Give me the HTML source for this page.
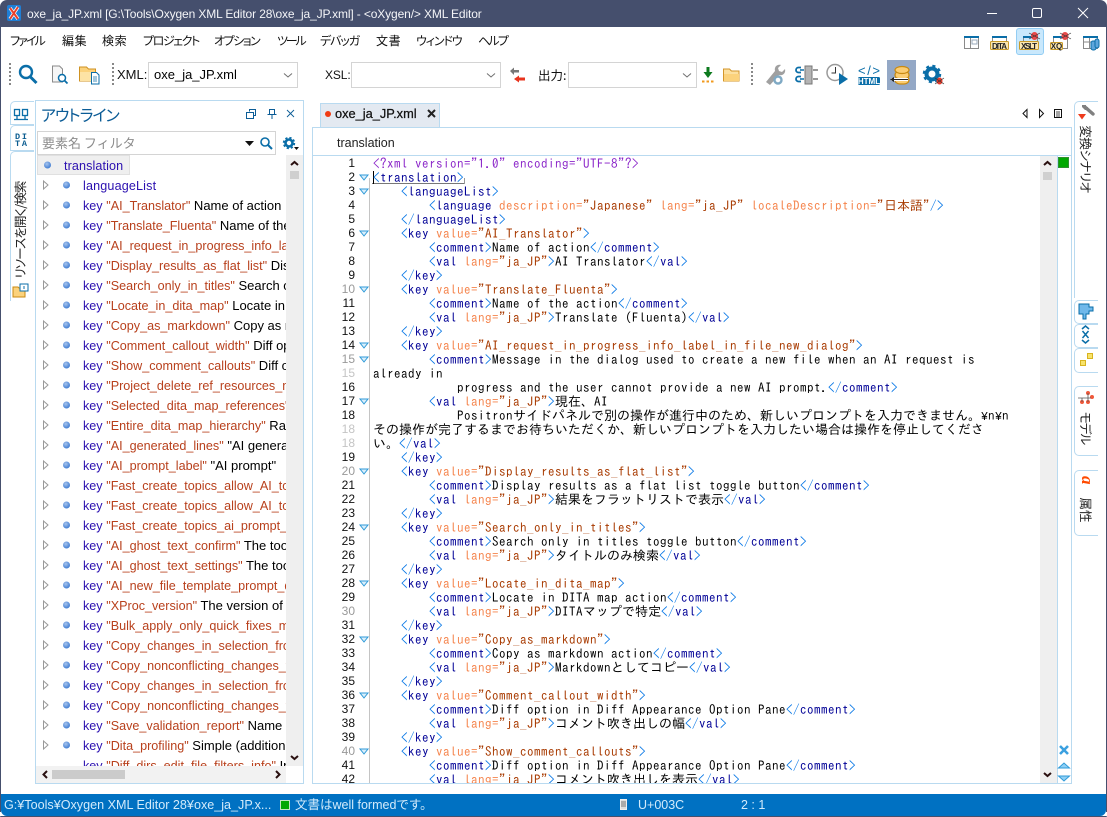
<!DOCTYPE html>
<html lang="ja"><head><meta charset="utf-8"><title>oxe_ja_JP.xml</title>
<style>
html,body{margin:0;padding:0;background:#fff}
#w{position:relative;width:1107px;height:817px;overflow:hidden;background:#fff;font-family:"Liberation Sans","Noto Sans CJK JP",sans-serif;color:#000}
#w>*{position:absolute}
.f{box-sizing:border-box;border:1px solid #b9daf0}
.m{top:32px;font-size:12px;line-height:18px;font-family:"Noto Sans CJK JP",sans-serif;font-feature-settings:"palt";white-space:nowrap;color:#111}
.cb{box-sizing:border-box;border:1px solid #d4d4d4;background:#fff;height:26px;top:62px}
.lb{top:67px;font-size:13px;line-height:16px;white-space:nowrap;color:#111}
#ol{left:36px;top:156px;width:250px;height:610px;overflow:hidden}
#ol div{position:absolute;left:47px;height:20px;line-height:20px;font-size:13px;white-space:nowrap}
#ol b{font-weight:normal;color:#2b10b0;font-size:12.6px}#ol u{text-decoration:none;color:#b8401c;font-size:12.6px}
#nums{left:320px;top:156px;width:35px;margin:0;text-align:right;font:12px/14px "Liberation Sans",sans-serif;height:627px;overflow:hidden;color:#111}
#nums s{text-decoration:none;color:#999}#nums q{quotes:none;color:#c4c4c4}
#code{left:373px;top:157px;width:666px;height:626px;overflow:hidden;margin:0;font:13px/14px "IPAGothic","Liberation Mono",monospace;letter-spacing:.5px;color:#000}
#code i{font-style:normal;letter-spacing:0}
#code em{font:11.6px/0 "Liberation Mono",monospace;letter-spacing:0}
.t{color:#000096}.b{color:#0a78e6}.a{color:#f5844c}.v{color:#a83a00}.p{color:#8b26c9}
.vt{font:12.5px/16px "Noto Sans CJK JP",sans-serif;font-feature-settings:"palt";white-space:nowrap;color:#222}
</style></head><body><div id="w">

<div style="left:0;top:0;width:1107px;height:27px;background:#454f6d;border-radius:7px 7px 0 0"></div>
<div style="left:27px;top:6px;font-size:12px;letter-spacing:-.125px;line-height:16px;color:#f4f5f8;white-space:nowrap">oxe_ja_JP.xml [G:\Tools\Oxygen XML Editor 28\oxe_ja_JP.xml] - &lt;oXygen/&gt; XML Editor</div>
<div style="left:0;top:27px;width:1px;height:785px;background:#454f6d"></div>
<div style="left:1106px;top:27px;width:1px;height:785px;background:#454f6d"></div>

<div class="m" style="left:10px;letter-spacing:-1.9px">ファイル</div>
<div class="m" style="left:62px;letter-spacing:.6px">編集</div>
<div class="m" style="left:102px;letter-spacing:.6px">検索</div>
<div class="m" style="left:143px;letter-spacing:-1.4px">プロジェクト</div>
<div class="m" style="left:214px;letter-spacing:-1.5px">オプション</div>
<div class="m" style="left:277px;letter-spacing:-2.2px">ツール</div>
<div class="m" style="left:320px;letter-spacing:-1.1px">デバッガ</div>
<div class="m" style="left:376px;letter-spacing:.6px">文書</div>
<div class="m" style="left:416px;letter-spacing:-1.1px">ウィンドウ</div>
<div class="m" style="left:478px;letter-spacing:-1.8px">ヘルプ</div>

<div class="lb" style="left:117px">XML:</div>
<div class="cb" style="left:148px;width:150px;font-size:13px;line-height:24px;padding-left:5px">oxe_ja_JP.xml</div>
<div class="lb" style="left:325px;font-size:12px;letter-spacing:-.1px">XSL:</div>
<div class="cb" style="left:351px;width:150px"></div>
<div class="lb" style="left:538px;font-family:'Noto Sans CJK JP',sans-serif;font-size:12.5px">出力:</div>
<div class="cb" style="left:568px;width:129px"></div>

<div style="left:1016px;top:28px;width:28px;height:27px;box-sizing:border-box;background:#c9e8fc;border:1px solid #93cdf3;border-radius:3px"></div>
<div style="left:887px;top:60px;width:29px;height:30px;background:#94a8c6"></div>

<div class="f" style="left:35px;top:100px;width:269px;height:684px"></div>
<div style="left:41px;top:104px;font:16px/20px 'Noto Sans CJK JP',sans-serif;font-feature-settings:'palt';letter-spacing:-1px;color:#0b5c96;white-space:nowrap">アウトライン</div>
<div style="left:37px;top:131px;width:239px;height:24px;box-sizing:border-box;border:1px solid #d4d4d4;padding-left:4px;font:13px/22px 'Noto Sans CJK JP',sans-serif;color:#8c8c8c;white-space:nowrap">要素名 フィルタ</div>

<div style="left:37px;top:155px;width:93px;height:20px;box-sizing:border-box;background:#efefef;border:1px solid #e0e0e0"></div>
<div id="ol">
<div style="left:28px;top:0"><b style="letter-spacing:.1px">translation</b></div>
<div style="top:20px"><b style="letter-spacing:.15px">languageList</b></div>
<div style="top:40px"><b>key</b> <u>"AI_Translator"</u> Name of action</div>
<div style="top:60px"><b>key</b> <u>"Translate_Fluenta"</u> Name of the action</div>
<div style="top:80px"><b>key</b> <u>"AI_request_in_progress_info_label</u></div>
<div style="top:100px"><b>key</b> <u>"Display_results_as_flat_list"</u> Display</div>
<div style="top:120px"><b>key</b> <u>"Search_only_in_titles"</u> Search only</div>
<div style="top:140px"><b>key</b> <u>"Locate_in_dita_map"</u> Locate in DITA</div>
<div style="top:160px"><b>key</b> <u>"Copy_as_markdown"</u> Copy as markdown</div>
<div style="top:180px"><b>key</b> <u>"Comment_callout_width"</u> Diff option</div>
<div style="top:200px"><b>key</b> <u>"Show_comment_callouts"</u> Diff option</div>
<div style="top:220px"><b>key</b> <u>"Project_delete_ref_resources_message</u></div>
<div style="top:240px"><b>key</b> <u>"Selected_dita_map_references"</u> Name</div>
<div style="top:260px"><b>key</b> <u>"Entire_dita_map_hierarchy"</u> Radio</div>
<div style="top:280px"><b>key</b> <u>"AI_generated_lines"</u> "AI generated</div>
<div style="top:300px"><b>key</b> <u>"AI_prompt_label"</u> "AI prompt"</div>
<div style="top:320px"><b>key</b> <u>"Fast_create_topics_allow_AI_to_use</u></div>
<div style="top:340px"><b>key</b> <u>"Fast_create_topics_allow_AI_to_use</u></div>
<div style="top:360px"><b>key</b> <u>"Fast_create_topics_ai_prompt_label</u></div>
<div style="top:380px"><b>key</b> <u>"AI_ghost_text_confirm"</u> The tooltip</div>
<div style="top:400px"><b>key</b> <u>"AI_ghost_text_settings"</u> The tooltip</div>
<div style="top:420px"><b>key</b> <u>"AI_new_file_template_prompt_dialog</u></div>
<div style="top:440px"><b>key</b> <u>"XProc_version"</u> The version of XProc</div>
<div style="top:460px"><b>key</b> <u>"Bulk_apply_only_quick_fixes_margin</u></div>
<div style="top:480px"><b>key</b> <u>"Copy_changes_in_selection_from_left</u></div>
<div style="top:500px"><b>key</b> <u>"Copy_nonconflicting_changes_from</u></div>
<div style="top:520px"><b>key</b> <u>"Copy_changes_in_selection_from_right</u></div>
<div style="top:540px"><b>key</b> <u>"Copy_nonconflicting_changes_from</u></div>
<div style="top:560px"><b>key</b> <u>"Save_validation_report"</u> Name of</div>
<div style="top:580px"><b>key</b> <u>"Dita_profiling"</u> Simple (additional)</div>
<div style="top:600px"><b>key</b> <u>"Diff_dirs_edit_file_filters_info"</u> Info</div>
</div>
<div style="left:286px;top:155px;width:17px;height:611px;background:#efefef"></div>
<div style="left:36px;top:766px;width:250px;height:17px;background:#f2f2f2"></div>
<div style="left:52px;top:770px;width:73px;height:9px;background:#cbcbcb"></div>
<div style="left:290px;top:171px;width:9px;height:8px;background:#cfcfcf"></div>

<div style="left:320px;top:103px;width:120px;height:25px;box-sizing:border-box;background:#e3e9f1;border:1px solid #b9daf0;border-bottom:0"></div>
<div style="left:335px;top:106px;font-size:12.8px;line-height:16px;color:#111;white-space:nowrap;-webkit-text-stroke:.25px #111">oxe_ja_JP.xml</div>
<div class="f" style="left:312px;top:127px;width:760px;height:657px"></div>
<div style="left:337px;top:135px;font-size:12.5px;line-height:16px;color:#222">translation</div>
<div style="left:313px;top:155px;width:758px;height:1px;background:#b9daf0"></div>
<div style="left:1040px;top:156px;width:17px;height:627px;background:#efefef"></div>
<div style="left:1057px;top:156px;width:1px;height:627px;background:#b9daf0"></div>
<div style="left:1043px;top:172px;width:9px;height:8px;background:#d0d0d0"></div>
<div style="left:1058px;top:157px;width:11px;height:11px;box-sizing:border-box;background:#00a800;border:1px solid #2f8f2f"></div>
<div style="left:369px;top:178px;width:1px;height:605px;background:#c4c4c4"></div>
<div style="left:372px;top:183px;width:93px;height:1px;background:#777"></div>
<div style="left:464px;top:178px;width:1px;height:6px;background:#999"></div>
<div style="left:373px;top:171px;width:1px;height:13px;background:#000"></div>

<pre id="nums">1
2
3
4
5
6
7
8
9
<s>10</s>
11
12
13
14
<s>15</s>
<q>15</q>
16
17
18
<q>18</q>
<q>18</q>
19
<s>20</s>
21
22
23
24
25
26
27
28
29
<s>30</s>
31
32
33
34
35
36
37
38
39
<s>40</s>
41
42</pre>

<pre id="code"><span class="p">&lt;?xml version="1.0" encoding="UTF-8"?&gt;</span>
<span class="b">&lt;</span><span class="t">translation</span><span class="b">&gt;</span>
    <span class="b">&lt;</span><span class="t">languageList</span><span class="b">&gt;</span>
        <span class="b">&lt;</span><span class="t">language</span> <span class="a">description=</span><span class="v">"Japanese"</span> <span class="a">lang=</span><span class="v">"ja_JP"</span> <span class="a">localeDescription=</span><span class="v">"<i>日本語</i>"</span><span class="b">/&gt;</span>
    <span class="b">&lt;/</span><span class="t">languageList</span><span class="b">&gt;</span>
    <span class="b">&lt;</span><span class="t">key</span> <span class="a">value=</span><span class="v">"AI_Translator"</span><span class="b">&gt;</span>
        <span class="b">&lt;</span><span class="t">comment</span><span class="b">&gt;</span>Name of action<span class="b">&lt;/</span><span class="t">comment</span><span class="b">&gt;</span>
        <span class="b">&lt;</span><span class="t">val</span> <span class="a">lang=</span><span class="v">"ja_JP"</span><span class="b">&gt;</span>AI Translator<span class="b">&lt;/</span><span class="t">val</span><span class="b">&gt;</span>
    <span class="b">&lt;/</span><span class="t">key</span><span class="b">&gt;</span>
    <span class="b">&lt;</span><span class="t">key</span> <span class="a">value=</span><span class="v">"Translate_Fluenta"</span><span class="b">&gt;</span>
        <span class="b">&lt;</span><span class="t">comment</span><span class="b">&gt;</span>Name of the action<span class="b">&lt;/</span><span class="t">comment</span><span class="b">&gt;</span>
        <span class="b">&lt;</span><span class="t">val</span> <span class="a">lang=</span><span class="v">"ja_JP"</span><span class="b">&gt;</span>Translate (Fluenta)<span class="b">&lt;/</span><span class="t">val</span><span class="b">&gt;</span>
    <span class="b">&lt;/</span><span class="t">key</span><span class="b">&gt;</span>
    <span class="b">&lt;</span><span class="t">key</span> <span class="a">value=</span><span class="v">"AI_request_in_progress_info_label_in_file_new_dialog"</span><span class="b">&gt;</span>
        <span class="b">&lt;</span><span class="t">comment</span><span class="b">&gt;</span>Message in the dialog used to create a new file when an AI request is
already in
            progress and the user cannot provide a new AI prompt.<span class="b">&lt;/</span><span class="t">comment</span><span class="b">&gt;</span>
        <span class="b">&lt;</span><span class="t">val</span> <span class="a">lang=</span><span class="v">"ja_JP"</span><span class="b">&gt;</span><i>現在、</i>AI
            Positron<i>サイドパネルで別の操作が進行中のため、新しいプロンプトを入力できません。</i><em>¥</em>n<em>¥</em>n
<i>その操作が完了するまでお待ちいただくか、新しいプロンプトを入力したい場合は操作を停止してくださ</i>
<i>い。</i><span class="b">&lt;/</span><span class="t">val</span><span class="b">&gt;</span>
    <span class="b">&lt;/</span><span class="t">key</span><span class="b">&gt;</span>
    <span class="b">&lt;</span><span class="t">key</span> <span class="a">value=</span><span class="v">"Display_results_as_flat_list"</span><span class="b">&gt;</span>
        <span class="b">&lt;</span><span class="t">comment</span><span class="b">&gt;</span>Display results as a flat list toggle button<span class="b">&lt;/</span><span class="t">comment</span><span class="b">&gt;</span>
        <span class="b">&lt;</span><span class="t">val</span> <span class="a">lang=</span><span class="v">"ja_JP"</span><span class="b">&gt;</span><i>結果をフラットリストで表示</i><span class="b">&lt;/</span><span class="t">val</span><span class="b">&gt;</span>
    <span class="b">&lt;/</span><span class="t">key</span><span class="b">&gt;</span>
    <span class="b">&lt;</span><span class="t">key</span> <span class="a">value=</span><span class="v">"Search_only_in_titles"</span><span class="b">&gt;</span>
        <span class="b">&lt;</span><span class="t">comment</span><span class="b">&gt;</span>Search only in titles toggle button<span class="b">&lt;/</span><span class="t">comment</span><span class="b">&gt;</span>
        <span class="b">&lt;</span><span class="t">val</span> <span class="a">lang=</span><span class="v">"ja_JP"</span><span class="b">&gt;</span><i>タイトルのみ検索</i><span class="b">&lt;/</span><span class="t">val</span><span class="b">&gt;</span>
    <span class="b">&lt;/</span><span class="t">key</span><span class="b">&gt;</span>
    <span class="b">&lt;</span><span class="t">key</span> <span class="a">value=</span><span class="v">"Locate_in_dita_map"</span><span class="b">&gt;</span>
        <span class="b">&lt;</span><span class="t">comment</span><span class="b">&gt;</span>Locate in DITA map action<span class="b">&lt;/</span><span class="t">comment</span><span class="b">&gt;</span>
        <span class="b">&lt;</span><span class="t">val</span> <span class="a">lang=</span><span class="v">"ja_JP"</span><span class="b">&gt;</span>DITA<i>マップで特定</i><span class="b">&lt;/</span><span class="t">val</span><span class="b">&gt;</span>
    <span class="b">&lt;/</span><span class="t">key</span><span class="b">&gt;</span>
    <span class="b">&lt;</span><span class="t">key</span> <span class="a">value=</span><span class="v">"Copy_as_markdown"</span><span class="b">&gt;</span>
        <span class="b">&lt;</span><span class="t">comment</span><span class="b">&gt;</span>Copy as markdown action<span class="b">&lt;/</span><span class="t">comment</span><span class="b">&gt;</span>
        <span class="b">&lt;</span><span class="t">val</span> <span class="a">lang=</span><span class="v">"ja_JP"</span><span class="b">&gt;</span>Markdown<i>としてコピー</i><span class="b">&lt;/</span><span class="t">val</span><span class="b">&gt;</span>
    <span class="b">&lt;/</span><span class="t">key</span><span class="b">&gt;</span>
    <span class="b">&lt;</span><span class="t">key</span> <span class="a">value=</span><span class="v">"Comment_callout_width"</span><span class="b">&gt;</span>
        <span class="b">&lt;</span><span class="t">comment</span><span class="b">&gt;</span>Diff option in Diff Appearance Option Pane<span class="b">&lt;/</span><span class="t">comment</span><span class="b">&gt;</span>
        <span class="b">&lt;</span><span class="t">val</span> <span class="a">lang=</span><span class="v">"ja_JP"</span><span class="b">&gt;</span><i>コメント吹き出しの幅</i><span class="b">&lt;/</span><span class="t">val</span><span class="b">&gt;</span>
    <span class="b">&lt;/</span><span class="t">key</span><span class="b">&gt;</span>
    <span class="b">&lt;</span><span class="t">key</span> <span class="a">value=</span><span class="v">"Show_comment_callouts"</span><span class="b">&gt;</span>
        <span class="b">&lt;</span><span class="t">comment</span><span class="b">&gt;</span>Diff option in Diff Appearance Option Pane<span class="b">&lt;/</span><span class="t">comment</span><span class="b">&gt;</span>
        <span class="b">&lt;</span><span class="t">val</span> <span class="a">lang=</span><span class="v">"ja_JP"</span><span class="b">&gt;</span><i>コメント吹き出しを表示</i><span class="b">&lt;/</span><span class="t">val</span><span class="b">&gt;</span></pre>

<div style="left:10px;top:101px;width:24px;height:24px;box-sizing:border-box;border:1px solid #b9daf0;border-right:0;border-radius:5px 0 0 0"></div>
<div style="left:10px;top:125px;width:24px;height:26px;box-sizing:border-box;border:1px solid #b9daf0;border-right:0;border-radius:5px 0 0 0"></div>
<div style="left:10px;top:151px;width:24px;height:150px;box-sizing:border-box;border:1px solid #b9daf0;border-right:0;border-bottom:0;border-radius:5px 0 0 0"></div>
<div class="vt" style="left:20px;top:230px;transform:translate(-50%,-50%) rotate(-90deg);letter-spacing:-.9px">リソースを開く/検索</div>

<div style="left:1074px;top:101px;width:24px;height:197px;box-sizing:border-box;border:1px solid #b9daf0;border-right:0;border-bottom:0;border-radius:5px 0 0 0"></div>
<div class="vt" style="left:1086px;top:159px;transform:translate(-50%,-50%) rotate(90deg);letter-spacing:-.5px">変換シナリオ</div>
<div style="left:1074px;top:300px;width:24px;height:24px;box-sizing:border-box;border:1px solid #b9daf0;border-right:0;border-radius:5px 0 0 5px"></div>
<div style="left:1074px;top:324px;width:24px;height:24px;box-sizing:border-box;border:1px solid #b9daf0;border-right:0;border-radius:5px 0 0 5px"></div>
<div style="left:1074px;top:348px;width:24px;height:25px;box-sizing:border-box;border:1px solid #b9daf0;border-right:0;border-radius:5px 0 0 5px"></div>
<div style="left:1074px;top:386px;width:24px;height:70px;box-sizing:border-box;border:1px solid #b9daf0;border-right:0;border-radius:5px 0 0 5px"></div>
<div class="vt" style="left:1086px;top:428px;transform:translate(-50%,-50%) rotate(90deg);letter-spacing:-1px">モデル</div>
<div style="left:1074px;top:470px;width:24px;height:66px;box-sizing:border-box;border:1px solid #b9daf0;border-right:0;border-radius:5px 0 0 5px"></div>
<div class="vt" style="left:1086px;top:510px;transform:translate(-50%,-50%) rotate(90deg)">属性</div>

<div style="left:1px;top:794px;width:1105px;height:22px;background:#0071c2;border-radius:0 0 6px 6px"></div>
<div style="left:0;top:816px;width:1107px;height:1px;background:#454f6d;border-radius:0 0 6px 6px"></div>
<div style="left:4px;top:797px;font-size:12.6px;line-height:16px;color:#d3ebfb;white-space:nowrap;font-family:'Liberation Sans','IPAGothic',sans-serif">G:¥Tools¥Oxygen XML Editor 28¥oxe_ja_JP.x...</div>
<div style="left:280px;top:800px;width:10px;height:10px;box-sizing:border-box;background:#00a800;border:1px solid #bfe6bf"></div>
<div style="left:295px;top:797px;font:12.5px/16px 'Liberation Sans','Noto Sans CJK JP',sans-serif;color:#d3ebfb;white-space:nowrap">文書はwell formedです。</div>
<div style="left:638px;top:797px;font-size:12.5px;line-height:16px;color:#d3ebfb;white-space:nowrap">U+003C</div>
<div style="left:741px;top:797px;font-size:12.5px;line-height:16px;color:#d3ebfb;white-space:nowrap">2 : 1</div>

<svg width="1107" height="817" viewBox="0 0 1107 817" style="left:0;top:0;pointer-events:none">
<!-- app logo -->
<rect x="7" y="5" width="14" height="16" rx="2" fill="#1f7fd6"/>
<path d="M10 8l8 11M18 7l-8 12" stroke="#fff" stroke-width="3.4"/><path d="M10 8l8 11M18 7l-8 12" stroke="#e8402a" stroke-width="2"/>
<!-- window controls -->
<path d="M987 13.500h10" stroke="#fff"/><rect x="1032.500" y="8.500" width="9" height="9" rx="1.500" fill="none" stroke="#fff"/>
<path d="M1078 8l10 10M1088 8l-10 10" stroke="#fff"/>
<!-- grips -->
<g stroke="#888" stroke-width="2" stroke-dasharray="2 2" fill="none"><path d="M10 63v24M113 63v24M752 63v24"/></g>
<!-- magnifier -->
<circle cx="26" cy="72" r="6" fill="none" stroke="#0a6ea8" stroke-width="2.400"/><path d="M30.500 77l6 6" stroke="#0a6ea8" stroke-width="3"/>
<!-- doc search -->
<path d="M52.500 66h7l3 3v13h-10z" fill="#f6f6f6" stroke="#8a8a8a"/>
<circle cx="62" cy="78" r="3.500" fill="#fff" stroke="#0a6ea8" stroke-width="1.500"/><path d="M64.500 80.500l3 3" stroke="#0a6ea8" stroke-width="1.800"/>
<!-- folder doc -->
<path d="M79.500 81V67h7l2 2h7v12z" fill="#fbd27c" stroke="#cf9222"/><rect x="80" y="72" width="15" height="9" fill="#fde3a5"/>
<path d="M91.500 72.500h5l2.500 2.500v9h-7.500z" fill="#fff" stroke="#0a6ea8"/><path d="M93 77h4M93 79h4M93 81h4" stroke="#0a6ea8" stroke-width=".8"/>
<!-- combo chevrons -->
<g fill="none" stroke="#707070"><path d="M284 73.500l4 3.500 4-3.500M487 73.500l4 3.500 4-3.500M683 73.500l4 3.500 4-3.500"/></g>
<!-- swap arrows -->
<path d="M510 71l4-3.500v2.500h5v2.500h-5v2.500z" fill="#777"/><path d="M514 79l5-3.500v2h6v3h-6v2z" fill="#e8341e"/>
<!-- green arrow -->
<path d="M706.500 67h3v5h3l-4.500 6-4.500-6h3z" fill="#0d7a1e"/><path d="M702 81.500h2.500M706.500 81.500h2.500M711 81.500h2.500" stroke="#f29a1d" stroke-width="2"/>
<!-- folder -->
<path d="M723.500 81V69h6l2 2h7.500v10z" fill="#fce0a0" stroke="#d3962a"/><rect x="724" y="74" width="15" height="7" fill="#fbd27c"/>
<!-- wrench -->
<path d="M766 82l9-11c-1-4 2-7 6-6l-3 3 1 3 3 1 3-3c1 4-2 7-6 6l-9 10z" fill="#a0a0a0"/>
<circle cx="778" cy="80" r="3.500" fill="#fff" stroke="#7fa9c4" stroke-width="2.400"/>
<!-- transform icon -->
<rect x="805" y="66" width="7" height="18" fill="#b4b4b4" stroke="#777"/>
<path d="M804 70h-4M804 79h-4" stroke="#0a6ea8" stroke-width="1.500"/>
<path d="M801 67.500h-2.500a2.500 2.500 0 0 0 0 5h2.500M801 76.500h-2.500a2.500 2.500 0 0 0 0 5h2.500" fill="none" stroke="#0a6ea8" stroke-width="1.800"/>
<path d="M813 70h5M813 79h5" stroke="#777" stroke-width="1.500"/>
<!-- clock -->
<circle cx="835" cy="72.500" r="8" fill="#fff" stroke="#9a9a9a" stroke-width="1.500"/><path d="M835.500 67v6h-4" fill="none" stroke="#333"/>
<path d="M839 73l9 6-9 6z" fill="#0a6ea8"/>
<!-- html -->
<text x="858" y="75" font-family="Liberation Sans,sans-serif" font-size="13" fill="#0a6ea8" textLength="22">&lt;/&gt;</text>
<rect x="858" y="77" width="22" height="8" rx="1.500" fill="#0a6ea8"/>
<text x="869" y="84" text-anchor="middle" font-family="Liberation Sans,sans-serif" font-size="8" font-weight="bold" fill="#fff">HTML</text>
<!-- database -->
<g fill="#fbcd72" stroke="#c98a12" stroke-width="1.200"><rect x="895" y="76" width="14" height="8" rx="5"/><rect x="895" y="71" width="14" height="8" rx="5"/><ellipse cx="902" cy="70" rx="7" ry="3.500"/></g>
<path d="M891 79.500h17" stroke="#fff" stroke-width="3"/><path d="M891 79.500h17" stroke="#222"/><path d="M894 77l-4 2.500 4 2.500z" fill="#222"/>
<!-- gear bug -->
<circle cx="932" cy="74" r="5.500" fill="none" stroke="#0a6ea8" stroke-width="4"/>
<circle cx="932" cy="74" r="8" fill="none" stroke="#0a6ea8" stroke-width="2.500" stroke-dasharray="3 3.300"/>
<ellipse cx="939.500" cy="81" rx="3" ry="3.500" fill="#e83a2a"/><path d="M935 78l9 6M944 78l-9 6" stroke="#333" stroke-width=".7"/>
<!-- perspective icons -->
<g fill="#fff" stroke="#8a8a8a">
<rect x="964.500" y="36.500" width="14" height="12"/><rect x="992.500" y="36.500" width="14" height="12"/><rect x="1023.500" y="36.500" width="14" height="12" fill="none"/><rect x="1053.500" y="36.500" width="14" height="12"/><rect x="1083.500" y="36.500" width="14" height="12"/></g>
<g fill="#0a6ea8"><rect x="964" y="36" width="15" height="2"/><rect x="992" y="36" width="15" height="2"/><rect x="1023" y="36" width="15" height="2"/><rect x="1053" y="36" width="15" height="2"/><rect x="1083" y="36" width="15" height="2"/></g>
<path d="M970.500 38v10M992.500 42h14M1083.500 42h14M1089.500 38v10" stroke="#8a8a8a"/><rect x="972" y="40" width="5" height="4" fill="none" stroke="#9ab"/>
<g font-family="Liberation Sans,sans-serif" font-size="8" font-weight="bold" fill="#222">
<rect x="990.500" y="41.500" width="18" height="8" fill="#fbe7b0" stroke="#c89a2a" rx="1"/><text x="999.500" y="49" text-anchor="middle" textLength="15">DITA</text>
<rect x="1019.500" y="41.500" width="19" height="8" fill="#fbe7b0" stroke="#c89a2a" rx="1"/><text x="1029" y="49" text-anchor="middle" textLength="16">XSLT</text>
<rect x="1050.500" y="42.500" width="12" height="7" fill="#fbe7b0" stroke="#c89a2a" rx="1"/><text x="1056.500" y="49" text-anchor="middle">XQ</text></g>
<ellipse cx="1034.500" cy="36" rx="3.500" ry="4" fill="#e84a4a"/><path d="M1029 33l11 6M1040 33l-11 6" stroke="#333" stroke-width=".7"/>
<ellipse cx="1065" cy="36" rx="3.500" ry="4" fill="#e84a4a"/><path d="M1060 33l11 6M1071 33l-11 6" stroke="#333" stroke-width=".7"/>
<rect x="1091" y="41" width="5" height="9" rx="2" fill="#5ea6dc" stroke="#0a6ea8"/><rect x="1095" y="39" width="4" height="9" rx="2" fill="#5ea6dc" stroke="#0a6ea8"/>
<!-- tab dot and close -->
<circle cx="328" cy="114" r="3" fill="#f03c14"/>
<path d="M428 110l7 7M435 110l-7 7" stroke="#222" stroke-width="2"/>
<!-- tab navigation -->
<path d="M1027 109.500v8l-4-4zM1039.500 109.500v8l4-4z" fill="#fff" stroke="#111"/>
<rect x="1054.500" y="109.500" width="7" height="8" fill="#fff" stroke="#111"/><path d="M1056 112h4M1056 114h4M1056 116h4" stroke="#111" stroke-width=".8"/>
<!-- panel header icons -->
<g fill="none" stroke="#0b5c96"><rect x="246.500" y="112.500" width="7" height="6"/><path d="M249.500 111.500v-2h6v6h-2"/>
<path d="M269.500 109.500h5v5h-5zM267.500 114.500h9M272 115v4"/><path d="M287 110l7 7M294 110l-7 7" stroke-width=".9"/></g>
<!-- left tab icons -->
<g fill="#fff" stroke="#0a6ea8" stroke-width="1.300"><rect x="14.500" y="109.500" width="5" height="6"/><rect x="22.500" y="109.500" width="5" height="6"/><path d="M17 116v3M25 116v3M14 119.500h14"/></g>
<text x="15" y="139" font-family="Liberation Mono,monospace" font-size="8.500" font-weight="bold" fill="#0a5c90" textLength="12">DI</text>
<text x="15" y="146" font-family="Liberation Mono,monospace" font-size="8.500" font-weight="bold" fill="#0a5c90" textLength="12">TA</text>
<path d="M13 297v-10h5l1 1h6v9z" fill="#fbd27c" stroke="#c98a12"/><rect x="20" y="284" width="8" height="7" fill="#fff" stroke="#0a6ea8"/><path d="M24 286v3" stroke="#0a6ea8"/>
<!-- filter -->
<path d="M245 141h9l-4.500 5z" fill="#111"/>
<circle cx="265" cy="142" r="4" fill="none" stroke="#0a6ea8" stroke-width="1.600"/><path d="M268 145l4 4" stroke="#0a6ea8" stroke-width="2"/>
<circle cx="289" cy="143" r="3.500" fill="none" stroke="#0a6ea8" stroke-width="2.600"/><circle cx="289" cy="143" r="5.300" fill="none" stroke="#0a6ea8" stroke-width="1.800" stroke-dasharray="2.200 2"/><path d="M294 147h5l-2.500 3z" fill="#111"/>
<!-- scroll chevrons -->
<g fill="none" stroke="#2a1010" stroke-width="2"><path d="M291 165l3.500-3 3.500 3M291 756l3.500 3 3.500-3M47 771l-3.500 3.500 3.500 3.500M276 771l3.500 3.500-3.500 3.500M1044 165l3.500-3 3.500 3M1044 773l3.500 3 3.500-3"/></g>
<!-- outline bullets -->
<defs><radialGradient id="g" cx=".4" cy=".35" r=".7"><stop offset="0" stop-color="#a6c4ee"/><stop offset="1" stop-color="#3a78d0"/></radialGradient></defs>
<g fill="url(#g)"><circle cx="47.500" cy="165" r="3.500"/>
<circle cx="66.500" cy="185" r="3.500"/><circle cx="66.500" cy="205" r="3.500"/><circle cx="66.500" cy="225" r="3.500"/><circle cx="66.500" cy="245" r="3.500"/><circle cx="66.500" cy="265" r="3.500"/><circle cx="66.500" cy="285" r="3.500"/><circle cx="66.500" cy="305" r="3.500"/><circle cx="66.500" cy="325" r="3.500"/><circle cx="66.500" cy="345" r="3.500"/><circle cx="66.500" cy="365" r="3.500"/><circle cx="66.500" cy="385" r="3.500"/><circle cx="66.500" cy="405" r="3.500"/><circle cx="66.500" cy="425" r="3.500"/><circle cx="66.500" cy="445" r="3.500"/><circle cx="66.500" cy="465" r="3.500"/><circle cx="66.500" cy="485" r="3.500"/><circle cx="66.500" cy="505" r="3.500"/><circle cx="66.500" cy="525" r="3.500"/><circle cx="66.500" cy="545" r="3.500"/><circle cx="66.500" cy="565" r="3.500"/><circle cx="66.500" cy="585" r="3.500"/><circle cx="66.500" cy="605" r="3.500"/><circle cx="66.500" cy="625" r="3.500"/><circle cx="66.500" cy="645" r="3.500"/><circle cx="66.500" cy="665" r="3.500"/><circle cx="66.500" cy="685" r="3.500"/><circle cx="66.500" cy="705" r="3.500"/><circle cx="66.500" cy="725" r="3.500"/><circle cx="66.500" cy="745" r="3.500"/></g>
<!-- outline expanders -->
<g fill="#fff" stroke="#999"><path d="M43.500 181v8l4.500-4zM43.500 201v8l4.500-4zM43.500 221v8l4.500-4zM43.500 241v8l4.500-4zM43.500 261v8l4.500-4zM43.500 281v8l4.500-4zM43.500 301v8l4.500-4zM43.500 321v8l4.500-4zM43.500 341v8l4.500-4zM43.500 361v8l4.500-4zM43.500 381v8l4.500-4zM43.500 401v8l4.500-4zM43.500 421v8l4.500-4zM43.500 441v8l4.500-4zM43.500 461v8l4.500-4zM43.500 481v8l4.500-4zM43.500 501v8l4.500-4zM43.500 521v8l4.500-4zM43.500 541v8l4.500-4zM43.500 561v8l4.500-4zM43.500 581v8l4.500-4zM43.500 601v8l4.500-4zM43.500 621v8l4.500-4zM43.500 641v8l4.500-4zM43.500 661v8l4.500-4zM43.500 681v8l4.500-4zM43.500 701v8l4.500-4zM43.500 721v8l4.500-4zM43.500 741v8l4.500-4z"/></g>
<!-- fold triangles -->
<g fill="#d8eefb" stroke="#2f9ad8"><path d="M360 175h8l-4 5zM360 189h8l-4 5zM360 231h8l-4 5zM360 287h8l-4 5zM360 343h8l-4 5zM360 357h8l-4 5zM360 399h8l-4 5zM360 469h8l-4 5zM360 525h8l-4 5zM360 581h8l-4 5zM360 637h8l-4 5zM360 693h8l-4 5zM360 749h8l-4 5z"/></g>
<!-- overview icons -->
<path d="M1060 746l8 8M1068 746l-8 8" stroke="#3aa0e0" stroke-width="2.600"/>
<path d="M1058.500 768l5.500-5 5.500 5z" fill="#8fd0f5" stroke="#2f9ad8"/><path d="M1058.500 776l5.500 5 5.500-5z" fill="#8fd0f5" stroke="#2f9ad8"/>
<!-- right tab icons -->
<path d="M1085 107l8 7" stroke="#808080" stroke-width="3.400" stroke-linecap="round"/><path d="M1082 105h4v2h2v3h-3l-3-3z" fill="#808080"/><path d="M1078 114h8l-4 5.500z" fill="#ee3a1c"/>
<path d="M1079 304h10v3h4v4h-4v3h-3v5h-3v-5h-4z" fill="#6fb8ea" stroke="#0a6ea8"/>
<g fill="none" stroke="#0a6ea8" stroke-width="1.500"><path d="M1082 329l3.500-3 3.500 3M1082 340l3.500 3 3.500-3M1082.500 331l6 7M1088.500 331l-6 7"/></g>
<rect x="1087.500" y="353.500" width="5" height="5" fill="#f7e36a" stroke="#d8b320"/><rect x="1080.500" y="360.500" width="5" height="5" fill="#f7e36a" stroke="#d8b320"/>
<g fill="#f0583a"><circle cx="1088" cy="393" r="2"/><circle cx="1082" cy="402" r="2"/><circle cx="1088" cy="402" r="2"/><circle cx="1092" cy="397" r="2"/></g><path d="M1078 398h13M1088 393v9M1082 398v4" stroke="#555" stroke-width=".8"/>
<text transform="translate(1082,476) rotate(90)" font-family="Liberation Serif,serif" font-style="italic" font-weight="bold" font-size="17" fill="#ff4a00">a</text>
<!-- status icon -->
<rect x="620.500" y="799.500" width="6" height="10" fill="#ddd" stroke="#eee"/><path d="M621 802h5M621 804h5M621 806h5" stroke="#555" stroke-width=".8"/>
</svg>
</div></body></html>
